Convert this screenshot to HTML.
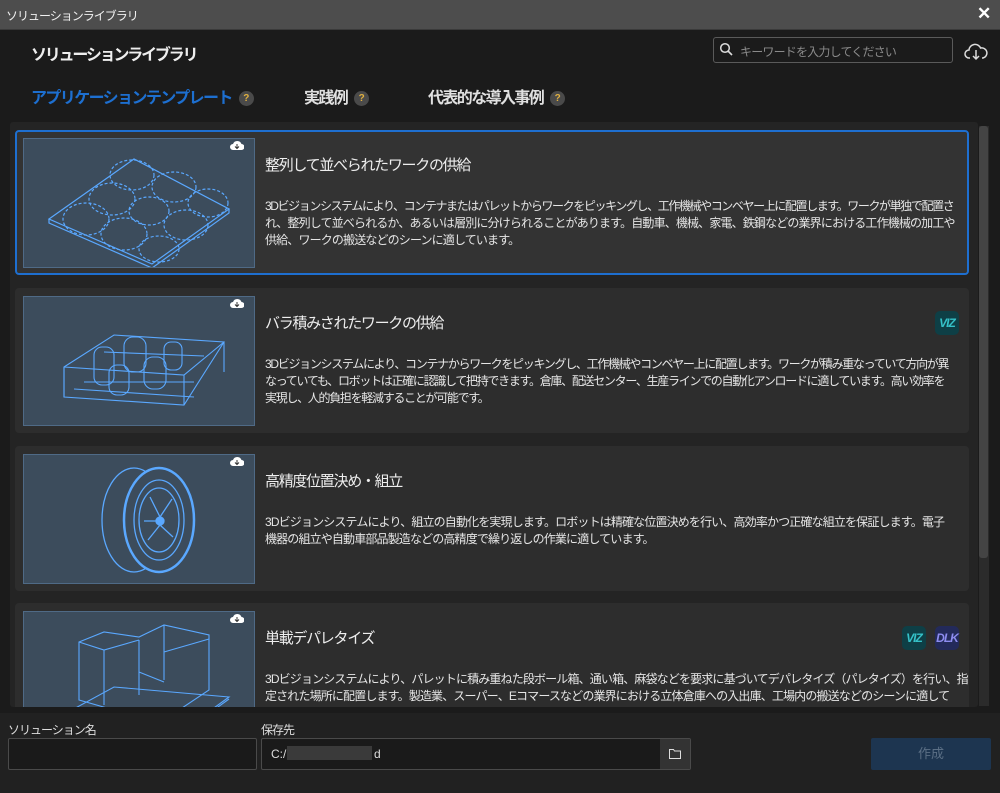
<!DOCTYPE html>
<html><head><meta charset="utf-8"><style>
*{margin:0;padding:0;box-sizing:border-box}
body{width:1000px;height:793px;background:#1b1b1b;font-family:"Liberation Sans","Noto Sans CJK JP",sans-serif;color:#e6e6e6;position:relative;overflow:hidden}
.abs{position:absolute}
.tb{left:0;top:0;width:1000px;height:30px;background:#4d4d4d;border-bottom:1px solid #3a3a3a}
.tab{font-size:16px;font-weight:bold;top:84px;color:#e0e0e0;letter-spacing:-1.6px}
.q{display:inline-block;width:15px;height:15px;border-radius:50%;background:#4a4a4a;color:#e0b040;font-size:10px;text-align:center;line-height:15px;vertical-align:2px;margin-left:7px;letter-spacing:0}
.card{left:15px;width:954px;background:#2d2d2d;border-radius:4px}
.img{position:absolute;left:8px;top:8px;width:232px;height:130px;background:#3c4c5c;border:1px solid #4f6a86;overflow:hidden}
.ttl{position:absolute;left:250px;top:24px;font-size:15px;color:#eee;letter-spacing:-1.3px}
.desc{position:absolute;left:250px;top:68px;font-size:12px;line-height:17px;color:#e6e6e6;white-space:nowrap;letter-spacing:-0.85px}
.dl{position:absolute;left:215px;top:10px;width:14px;height:11px}
.badge{position:absolute;top:23px;width:24px;height:24px;border-radius:5px;font-size:12px;font-weight:bold;text-align:center;line-height:24px;font-style:italic;letter-spacing:-1px}
.viz{background:#0e3f46;color:#35c1c8}
.dlk{background:#232a5a;color:#8d8cf0}
</style></head><body>
<div class="abs tb"></div>
<div class="abs" style="left:6px;top:7px;font-size:12px;color:#f0f0f0;letter-spacing:-1px">ソリューションライブラリ</div>
<div class="abs" style="left:977px;top:4px;font-size:17px;color:#fff;font-weight:bold">✕</div>
<div class="abs" style="left:31px;top:41px;font-size:16px;font-weight:bold;color:#eee;letter-spacing:-2.2px">ソリューションライブラリ</div>
<div class="abs" style="left:713px;top:37px;width:240px;height:26px;border:1px solid #5a5a5a;border-radius:3px"></div>
<svg class="abs" style="left:719px;top:42px" width="14" height="14" viewBox="0 0 14 14"><circle cx="6" cy="6" r="4.3" fill="none" stroke="#ddd" stroke-width="1.5"/><path d="M9 9l4 4" stroke="#ddd" stroke-width="1.6"/></svg>
<div class="abs" style="left:740px;top:43px;font-size:12px;color:#8a8a8a;letter-spacing:-0.8px">キーワードを入力してください</div>
<svg class="abs" style="left:964px;top:40px" width="24" height="22" viewBox="0 0 24 22"><path d="M6 18h-1a4 4 0 0 1 0-8 6 6 0 0 1 11.5-2 4.8 4.8 0 0 1 2.5 10h-1" fill="none" stroke="#ddd" stroke-width="1.5"/><path d="M12 10v9M9 16l3 3 3-3" fill="none" stroke="#ddd" stroke-width="1.5"/></svg>
<div class="abs tab" style="left:31px;color:#1d6fd0">アプリケーションテンプレート<span class="q">?</span></div>
<div class="abs tab" style="left:304px">実践例<span class="q">?</span></div>
<div class="abs tab" style="left:428px">代表的な導入事例<span class="q">?</span></div>

<div class="abs" style="left:10px;top:122px;width:968px;height:585px;background:#242424;border-radius:3px"></div>
<div class="abs" style="left:979px;top:126px;width:10px;height:580px;background:#2b2b2b"></div>
<div class="abs" style="left:979px;top:126px;width:9px;height:432px;background:#444;border-radius:3px"></div>

<div class="abs card" style="top:130px;height:145px;border:2px solid #1e6fd0;background:#333">
 <div class="img" style="left:6px;top:6px"><svg width="232" height="130" viewBox="0 0 232 130" fill="none" stroke="#5aa8ff" stroke-width="1.2">
  <path d="M25 80L110 20 205 70 128 125Z"/><path d="M25 80v4l103 45 77-55v-4"/>
  <g stroke-dasharray="3 2"><ellipse cx="108" cy="36" rx="22" ry="15"/><ellipse cx="150" cy="48" rx="22" ry="15"/><ellipse cx="184" cy="64" rx="20" ry="14"/><ellipse cx="88" cy="60" rx="23" ry="16"/><ellipse cx="125" cy="72" rx="20" ry="14"/><ellipse cx="162" cy="86" rx="22" ry="15"/><ellipse cx="62" cy="80" rx="23" ry="16"/><ellipse cx="100" cy="95" rx="23" ry="16"/><ellipse cx="135" cy="110" rx="20" ry="13"/></g>
 </svg></div>
 <svg class="dl" style="left:213px;top:8px" viewBox="0 0 14 11"><path d="M3 10a3 3 0 0 1 0-6 4.5 4.5 0 0 1 8.5 0 3 3 0 0 1 0 6z" fill="#fff"/><path d="M7 4v4M5 6.5l2 2 2-2" stroke="#333" fill="none"/></svg>
 <div class="ttl" style="left:248px;top:22px">整列して並べられたワークの供給</div>
 <div class="desc" style="left:248px;top:66px"><span style="letter-spacing:-1.4px">3Dビジョンシステムにより、コンテナまたはパレットからワークをピッキングし、工作機械やコンベヤー上に配置します。ワークが単独で配置さ</span><br>れ、整列して並べられるか、あるいは層別に分けられることがあります。自動車、機械、家電、鉄鋼などの業界における工作機械の加工や<br>供給、ワークの搬送などのシーンに適しています。</div>
</div>

<div class="abs card" style="top:288px;height:145px">
 <div class="img"><svg width="232" height="130" viewBox="0 0 232 130" fill="none" stroke="#5aa8ff" stroke-width="1.1">
  <path d="M40 70L90 38 200 45 160 108 40 100Z"/><path d="M40 70v30M160 78v30M200 45v30M40 70l120 8 40-33"/>
  <path d="M60 85h110M50 92l120 8M80 55l100 4"/>
  <rect x="70" y="50" width="20" height="38" rx="8"/><rect x="100" y="40" width="22" height="35" rx="9"/><rect x="120" y="60" width="22" height="32" rx="9"/><rect x="85" y="68" width="20" height="30" rx="8"/><rect x="140" y="45" width="18" height="28" rx="7"/>
 </svg></div>
 <svg class="dl" viewBox="0 0 14 11"><path d="M3 10a3 3 0 0 1 0-6 4.5 4.5 0 0 1 8.5 0 3 3 0 0 1 0 6z" fill="#fff"/><path d="M7 4v4M5 6.5l2 2 2-2" stroke="#333" fill="none"/></svg>
 <div class="ttl">バラ積みされたワークの供給</div>
 <div class="badge viz" style="left:920px">VIZ</div>
 <div class="desc" style="letter-spacing:-1.3px">3Dビジョンシステムにより、コンテナからワークをピッキングし、工作機械やコンベヤー上に配置します。ワークが積み重なっていて方向が異<br>なっていても、ロボットは正確に認識して把持できます。倉庫、配送センター、生産ラインでの自動化アンロードに適しています。高い効率を<br>実現し、人的負担を軽減することが可能です。</div>
</div>

<div class="abs card" style="top:446px;height:145px">
 <div class="img"><svg width="232" height="130" viewBox="0 0 232 130" fill="none" stroke="#5aa8ff" stroke-width="1.3">
  <ellipse cx="110" cy="65" rx="32" ry="52"/><ellipse cx="135" cy="65" rx="35" ry="52" stroke-width="2.5" fill="#3c4c5c"/><ellipse cx="135" cy="65" rx="25" ry="40"/><ellipse cx="135" cy="65" rx="20" ry="32"/><circle cx="136" cy="66" r="4" fill="#5aa8ff"/>
  <path d="M136 62l-10-20M136 62l12-18M136 70l-12 15M136 70l13 12M132 66h-12"/>
 </svg></div>
 <svg class="dl" viewBox="0 0 14 11"><path d="M3 10a3 3 0 0 1 0-6 4.5 4.5 0 0 1 8.5 0 3 3 0 0 1 0 6z" fill="#fff"/><path d="M7 4v4M5 6.5l2 2 2-2" stroke="#333" fill="none"/></svg>
 <div class="ttl">高精度位置決め・組立</div>
 <div class="desc">3Dビジョンシステムにより、組立の自動化を実現します。ロボットは精確な位置決めを行い、高効率かつ正確な組立を保証します。電子<br>機器の組立や自動車部品製造などの高精度で繰り返しの作業に適しています。</div>
</div>

<div class="abs card" style="top:603px;height:104px;border-radius:4px 4px 0 0;overflow:hidden">
 <div class="img"><svg width="232" height="130" viewBox="0 0 232 130" fill="none" stroke="#5aa8ff" stroke-width="1.1">
  <path d="M35 105L90 75 205 85 150 125Z"/><path d="M35 107l115 20 55-40"/>
  <path d="M55 30l25-10 35 5 25-12 45 10v55l-45 30-50-10-35-10z"/><path d="M55 30l25 8 35-10M80 38v55M115 28v55M140 13v55M140 40l45-13M115 60l25 10"/>
 </svg></div>
 <svg class="dl" viewBox="0 0 14 11"><path d="M3 10a3 3 0 0 1 0-6 4.5 4.5 0 0 1 8.5 0 3 3 0 0 1 0 6z" fill="#fff"/><path d="M7 4v4M5 6.5l2 2 2-2" stroke="#333" fill="none"/></svg>
 <div class="ttl">単載デパレタイズ</div>
 <div class="badge viz" style="left:887px">VIZ</div>
 <div class="badge dlk" style="left:920px">DLK</div>
 <div class="desc">3Dビジョンシステムにより、パレットに積み重ねた段ボール箱、通い箱、麻袋などを要求に基づいてデパレタイズ（パレタイズ）を行い、指<br>定された場所に配置します。製造業、スーパー、Eコマースなどの業界における立体倉庫への入出庫、工場内の搬送などのシーンに適して</div>
</div>

<div class="abs" style="left:0;top:713px;width:1000px;height:80px;background:#212121"></div>
<div class="abs" style="left:8px;top:721px;font-size:12px;color:#ddd;letter-spacing:-1px">ソリューション名</div>
<div class="abs" style="top:721px;font-size:12px;color:#ddd;left:261px;letter-spacing:-1px">保存先</div>
<div class="abs" style="left:8px;top:738px;width:249px;height:32px;background:#1a1a1a;border:1px solid #4a4a4a;border-radius:2px"></div>
<div class="abs" style="left:261px;top:738px;width:430px;height:32px;background:#1a1a1a;border:1px solid #4a4a4a;border-radius:2px"></div>
<div class="abs" style="left:660px;top:739px;width:30px;height:30px;background:#333"></div>
<svg class="abs" style="left:668px;top:746px" width="14" height="14" viewBox="0 0 14 14"><path d="M1.5 3.5h4l1 1.5h6v7.5h-11z" fill="none" stroke="#ddd"/></svg>
<div class="abs" style="left:271px;top:747px;font-size:12px;color:#ddd">C:/l</div>
<div class="abs" style="left:287px;top:746px;width:85px;height:14px;background:#3a3a3a"></div>
<div class="abs" style="left:374px;top:747px;font-size:12px;color:#ddd">d</div>
<div class="abs" style="left:871px;top:738px;width:120px;height:32px;background:#1d3550;border-radius:2px;color:#5b6f85;font-size:13px;text-align:center;line-height:32px">作成</div>
</body></html>
